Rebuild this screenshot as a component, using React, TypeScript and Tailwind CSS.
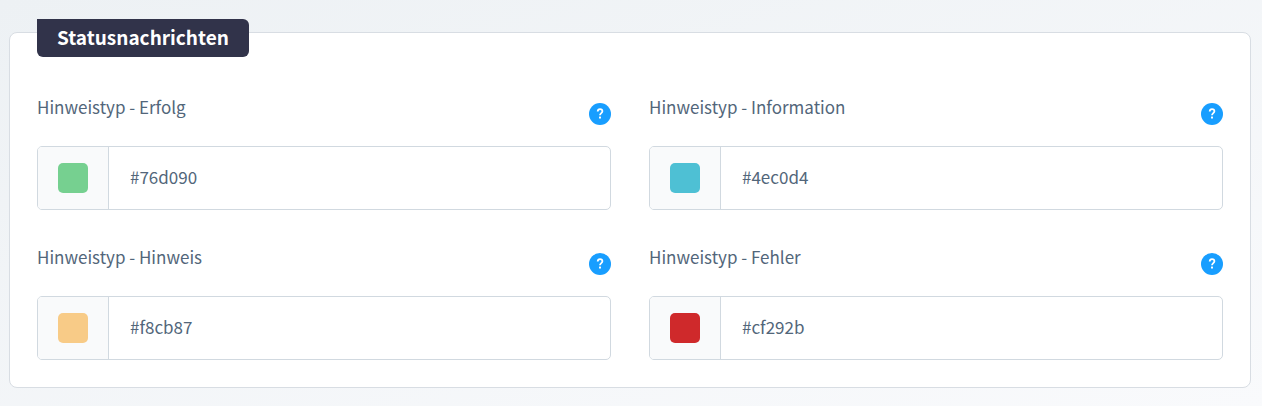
import { useId, useState } from "react";

type ColorFieldProps = {
  label: string;
  initialColor: string;
};

const HelpIcon = () => (
  <svg viewBox="0 0 22 22" className="h-[22px] w-[22px]" aria-hidden="true">
    <circle cx="11" cy="11" r="11" fill="#189eff" />
    <path
      d="M8.7 8.5C8.8 7 9.7 6.1 11 6.1c1.4 0 2.4.9 2.4 2.2 0 1.7-2.4 1.9-2.4 3.9"
      fill="none"
      stroke="#fff"
      strokeWidth="1.8"
    />
    <rect x="10" y="13.6" width="2" height="2" rx="0.4" fill="#fff" />
  </svg>
);

const ColorField = ({ label, initialColor }: ColorFieldProps) => {
  const id = useId();
  const [color, setColor] = useState<string>(initialColor);

  return (
    <div>
      {/* LABEL */}
      <div className="flex h-[52px] items-start justify-between">
        <label htmlFor={id} className="text-[17px] leading-[26px]">
          {label}
        </label>
        <button type="button" aria-label={`Hilfe: ${label}`} className="mt-[9px] cursor-pointer">
          <HelpIcon />
        </button>
      </div>

      {/* INPUT */}
      <div className="flex h-16 overflow-hidden rounded-[5px] border border-[#d1d9e0] bg-white">
        <div className="flex w-[71px] shrink-0 items-center justify-center border-r border-[#d1d9e0] bg-[#f9fafb]">
          <div className="h-[30px] w-[30px] rounded-[5px]" style={{ backgroundColor: color }} />
        </div>
        <input
          id={id}
          type="text"
          value={color}
          onChange={(e) => setColor(e.target.value)}
          className="w-full min-w-0 px-[21px] pb-0.5 text-[17px] leading-6 outline-none"
        />
      </div>
    </div>
  );
};

const fields: ColorFieldProps[] = [
  { label: "Hinweistyp - Erfolg", initialColor: "#76d090" },
  { label: "Hinweistyp - Information", initialColor: "#4ec0d4" },
  { label: "Hinweistyp - Hinweis", initialColor: "#f8cb87" },
  { label: "Hinweistyp - Fehler", initialColor: "#cf292b" },
];

const App = () => {
  return (
    <main className="min-h-screen bg-linear-to-br from-[#edf1f4] to-[#f9fafc] pt-8 pr-[11px] pb-[18px] pl-[9px] font-['Noto_Sans_CJK_SC',sans-serif] text-[#52667a]">
      <section className="rounded-lg border border-[#d8dde3] bg-white px-[27px] pb-[27px]">
        <h2 className="-mt-3.5 flex h-[38px] w-fit items-center rounded-md rounded-tl-none bg-[#31334a] px-5 pb-0.5 text-[19px] leading-6 font-bold text-white">
          Statusnachrichten
        </h2>
        <div className="mt-[37px] grid grid-cols-2 gap-x-[38px] gap-y-[34px]">
          {fields.map((field) => (
            <ColorField key={field.label} {...field} />
          ))}
        </div>
      </section>
    </main>
  );
};

export default App;
